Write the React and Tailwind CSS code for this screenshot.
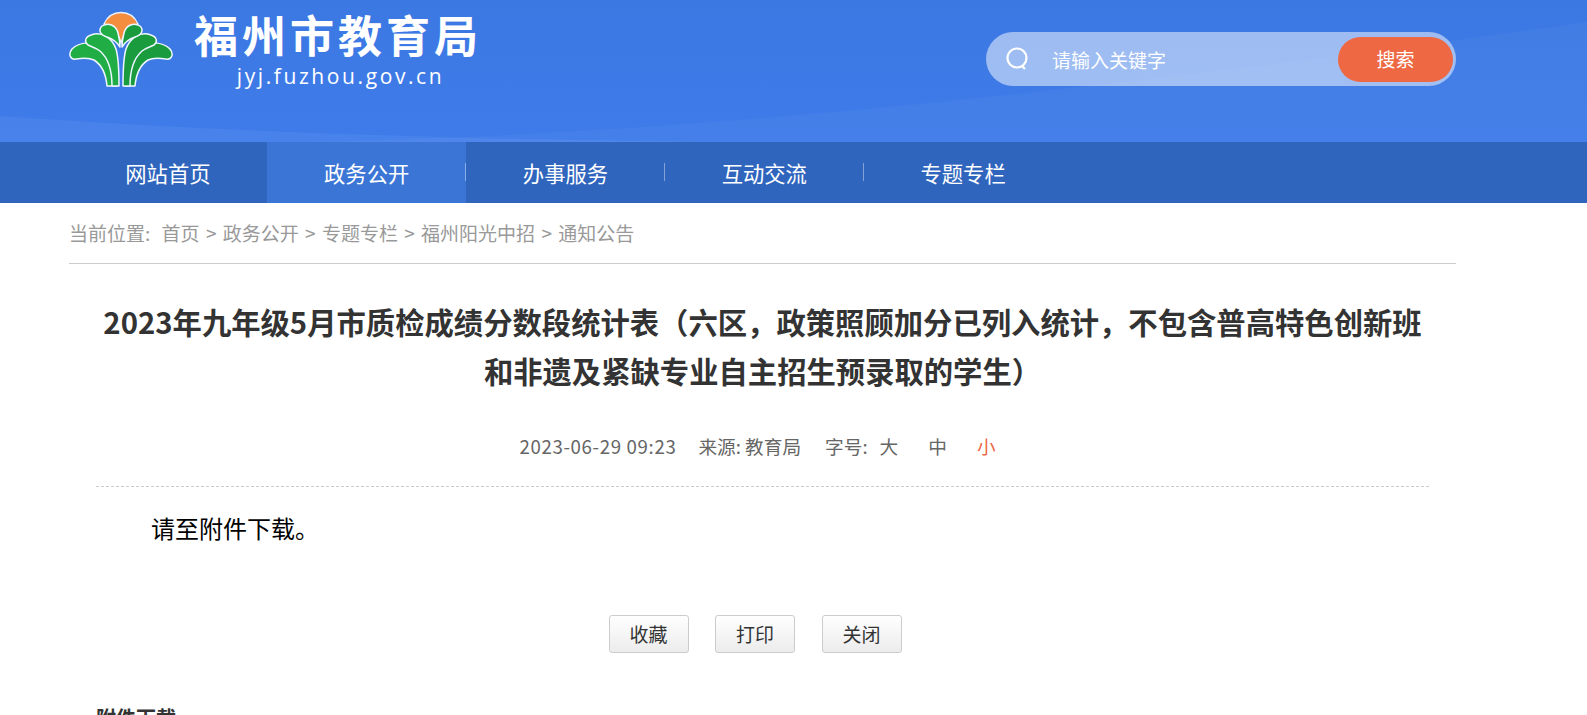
const navItems = ['网站首页', '政务公开', '办事服务', '互动交流', '专题专栏']
const crumbs = ['首页', '政务公开', '专题专栏', '福州阳光中招', '通知公告']

function Logo() {
  const fronds = (
    <>
      <path d="M38 75 C37 64 33 54 25 49 C19 46 13 47 7 48 C1 49 -1 43 3 38 C10 31 25 29 36 37 C44 44 48 58 48 75 Z" />
      <path d="M43 75 C43 60 39 47 31 40 C27 37 23 36 19 34 C15 31 16 26 22 24 C33 20 43 27 47 38 C50 48 50 62 50 75 Z" />
      <path d="M51 36 C48 31 44 28 38 26 C31 24 29 19 33 15 C39 11 47 14 49 22 C50 26 51 31 51 36 Z" />
    </>
  )
  return (
    <svg viewBox="0 0 104 76" className="h-[76px] w-[104px] shrink-0">
      <path d="M35 13 C39 4 46 1.500 52 1.500 C58 1.500 65 4 69 13 C60 15 55 21 52 32 C49 21 44 15 35 13 Z" fill="#f58d3f" stroke="#e8f1ff" strokeWidth="1.3" />
      <g fill="#20ad46" stroke="#eef6ff" strokeWidth="1.5" strokeLinejoin="round">
        {fronds}
        <g transform="translate(104 0) scale(-1 1)" fill="#1a9c3e">{fronds}</g>
      </g>
    </svg>
  )
}

export default function App() {
  return (
    <div className='h-[715px] overflow-hidden bg-white font-["Noto_Sans_CJK_SC",sans-serif]'>
      <header className="relative h-[142px] overflow-hidden bg-gradient-to-b from-[#3b78e2] to-[#3f7cea]">
        {/* swoosh of the banner */}
        <svg viewBox="0 0 1587 142" preserveAspectRatio="none" className="absolute inset-0 h-full w-full">
          <path d="M300 142 C700 135 1100 90 1587 22 L1587 142 Z" fill="#ffffff" fillOpacity="0.03" />
          <path d="M0 116 C200 130 400 138 700 142 L0 142 Z" fill="#ffffff" fillOpacity="0.05" />
        </svg>
        <div className="relative ml-[69px] flex w-[1387px] items-start justify-between">
          <div className="flex items-start">
            <div className="mt-[11px]">
              <Logo />
            </div>
            <div className="ml-[21px] mt-[4px] flex flex-col items-center text-white">
              <div className="text-[44px] font-bold leading-[60px] tracking-[4px]">福州市教育局</div>
              <div className='ml-[5px] font-["Open_Sans",sans-serif] text-[21px] font-medium leading-[24px] tracking-[2.6px]'>jyj.fuzhou.gov.cn</div>
            </div>
          </div>
          <div className="mt-[32px] flex h-[54px] w-[470px] items-center rounded-full bg-white/50 pl-[19px] pr-[3px]">
            <svg viewBox="0 0 24 24" fill="none" stroke="#ffffff" strokeWidth="2.2" className="-mt-[2px] h-[24px] w-[24px] shrink-0">
              <circle cx="12" cy="12" r="9.5" />
              <path d="M17 20 L20 23" />
            </svg>
            <span className="ml-[23px] mt-[2px] text-[19px] text-white">请输入关键字</span>
            <button className="ml-auto h-[45px] w-[115px] rounded-full bg-[#ee6843] text-[19px] text-white">搜索</button>
          </div>
        </div>
      </header>

      <nav className="h-[61px] bg-[#2f65bd]">
        <ul className="ml-[68.5px] flex h-full">
          {navItems.map((item, i) => (
            <li key={item} className={`relative flex h-full w-[198.8px] items-center justify-center ${i === 1 ? 'bg-[#3b76d6]' : ''}`}>
              <span className="text-[21.33px] text-white">{item}</span>
              {i > 0 && i < 4 && <i className="absolute right-0 top-[21px] h-[18px] w-px bg-white/40" />}
            </li>
          ))}
        </ul>
      </nav>

      <main className="ml-[69px] w-[1387px]">
        <div className="flex h-[61px] items-center gap-[6.3px] border-b border-[#cccccc] text-[19px] text-[#999999]">
          <span className="mr-[5px]">当前位置:</span>
          {crumbs.map((c, i) => (
            <span key={c} className="flex gap-[6.3px]">
              {i > 0 && <span>&gt;</span>}
              <span>{c}</span>
            </span>
          ))}
        </div>

        <div className="mx-[27px]">
          <h1 className="mt-[33px] text-center text-[29.33px] font-bold leading-[49px] text-[#333333]">
            2023年九年级5月市质检成绩分数段统计表（六区，政策照顾加分已列入统计，不包含普高特色创新班和非遗及紧缺专业自主招生预录取的学生）
          </h1>

          <div className="mt-[35px] flex h-[57px] items-start justify-center border-b border-dashed border-[#cccccc] pr-[10px] pt-[2px] text-[18.67px] leading-[28px] text-[#666666]">
            <span className="tracking-[0.65px]">2023-06-29 09:23</span>
            <span className="ml-[22px]">来源: 教育局</span>
            <span className="ml-[24px]">字号:</span>
            <span className="ml-[12px]">大</span>
            <span className="ml-[30px]">中</span>
            <span className="ml-[30px] text-[#ee6843]">小</span>
          </div>

          <p className="mt-[23px] pl-[55px] text-[24px] leading-[36px] text-black">请至附件下载。</p>

          <div className="mt-[69px] flex justify-center gap-[26.5px] pr-[15px]">
            {['收藏', '打印', '关闭'].map(b => (
              <button key={b} className="h-[38px] w-[80px] rounded-[3px] border border-[#cccccc] bg-gradient-to-b from-white to-[#ececec] text-[19px] text-[#333333]">
                {b}
              </button>
            ))}
          </div>

          <div className="mt-[50px] text-[20px] font-bold text-[#333333]">附件下载</div>
        </div>
      </main>
    </div>
  )
}
